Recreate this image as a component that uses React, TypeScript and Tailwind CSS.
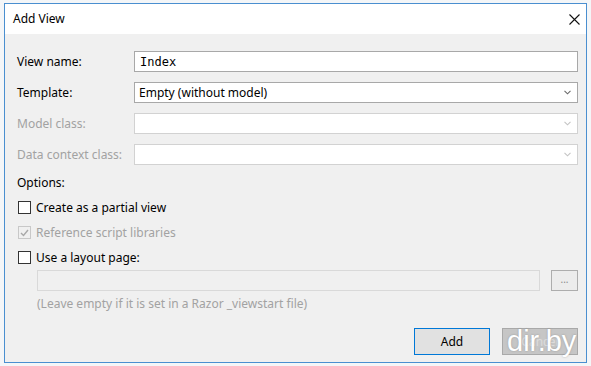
import React from 'react';

const font = { fontFamily: '"Noto Sans", "Open Sans", Arial, sans-serif' };

/** Small combobox chevron */
const Chevron: React.FC<{ disabled?: boolean }> = ({ disabled }) => (
  <svg width="7" height="5" viewBox="0 0 7 5" className="shrink-0">
    <path
      d="M0.5 0.8 L3.5 3.8 L6.5 0.8"
      fill="none"
      stroke={disabled ? '#c4c4c4' : '#6a6a6a'}
      strokeWidth="1.1"
    />
  </svg>
);

const FieldRow: React.FC<{
  label: string;
  disabled?: boolean;
  children: React.ReactNode;
}> = ({ label, disabled, children }) => (
  <div className="flex items-center h-[21px]">
    <span
      className={`w-[117px] shrink-0 text-[12px] ${disabled ? 'text-[#a2a2a2]' : 'text-black'}`}
    >
      {label}
    </span>
    {children}
  </div>
);

const Select: React.FC<{ value?: string; disabled?: boolean }> = ({ value, disabled }) => (
  <div
    className={`flex-1 h-[21px] flex items-center justify-between pl-[4px] pr-[6px] bg-white border ${
      disabled ? 'border-[#d2d2d2]' : 'border-[#a8a8a8]'
    }`}
  >
    <span className="text-[12px] text-black">{value}</span>
    <Chevron disabled={disabled} />
  </div>
);

const Checkbox: React.FC<{ checked?: boolean; disabled?: boolean; label: string }> = ({
  checked,
  disabled,
  label,
}) => (
  <div className="flex items-center h-[25px]">
    <div
      className={`w-[13px] h-[13px] ml-[1px] border flex items-center justify-center ${
        disabled ? 'border-[#c8c8c8] bg-[#f0f0f0]' : 'border-[#333333] bg-white'
      }`}
    >
      {checked && (
        <svg width="9" height="8" viewBox="0 0 9 8">
          <path d="M1 4 L3.5 6.5 L8 1" fill="none" stroke="#a8a8a8" strokeWidth="1.4" />
        </svg>
      )}
    </div>
    <span className={`ml-[5px] text-[12px] ${disabled ? 'text-[#a2a2a2]' : 'text-black'}`}>
      {label}
    </span>
  </div>
);

export default function App() {
  return (
    <div className="w-[591px] h-[366px] bg-[#f4f6f8] overflow-hidden relative" style={font}>
      <div className="ml-[4px] mt-[3px] w-[583px] h-[360px] border border-[#4a8fd0] flex flex-col">
        {/* title bar */}
        <div className="h-[30px] bg-white flex items-center justify-between pl-[8px] pr-[6px] shrink-0">
          <span className="text-[12px] text-black">Add View</span>
          <svg width="11" height="11" viewBox="0 0 11 11">
            <path d="M0.5 0.5 L10.5 10.5 M10.5 0.5 L0.5 10.5" stroke="#111" strokeWidth="1.1" />
          </svg>
        </div>

        {/* body */}
        <div className="flex-1 bg-[#f0f0f0] pt-[17px] pl-[12px] pr-[8px] flex flex-col">
          <FieldRow label="View name:">
            <div className="flex-1 h-[21px] flex items-center pl-[5px] bg-white border border-[#a8a8a8]">
              <span className="text-[12px] text-black" style={{ fontFamily: '"DejaVu Sans Mono", "Liberation Mono", monospace' }}>
                Index
              </span>
            </div>
          </FieldRow>
          <div className="mt-[10px]">
            <FieldRow label="Template:">
              <Select value="Empty (without model)" />
            </FieldRow>
          </div>
          <div className="mt-[10px]">
            <FieldRow label="Model class:" disabled>
              <Select disabled />
            </FieldRow>
          </div>
          <div className="mt-[10px]">
            <FieldRow label="Data context class:" disabled>
              <Select disabled />
            </FieldRow>
          </div>

          <div className="mt-[10px] h-[16px] flex items-center text-[12px] text-black">Options:</div>
          <div className="mt-[4px]">
            <Checkbox label="Create as a partial view" />
            <Checkbox label="Reference script libraries" checked disabled />
            <Checkbox label="Use a layout page:" />
          </div>

          <div className="flex items-center ml-[20px] h-[21px]">
            <div className="flex-1 h-[21px] bg-[#f0f0f0] border border-[#d9d9d9]" />
            <div className="ml-[11px] w-[27px] h-[21px] flex items-center justify-center bg-[#ececec] border border-[#adadad] text-[10px] text-[#8a8a8a] leading-none pb-[3px]">
              ...
            </div>
          </div>
          <div className="ml-[20px] mt-[5px] h-[16px] flex items-center text-[12px] text-[#a2a2a2]">
            (Leave empty if it is set in a Razor _viewstart file)
          </div>

          <div className="mt-[16px] flex justify-end gap-[12px]">
            <div className="w-[76px] h-[27px] flex items-center justify-center bg-[#e1e1e1] border border-[#0078d7] text-[12px] text-black">
              Add
            </div>
            <div className="w-[76px] h-[27px] flex items-center justify-center bg-[#c6c6c6] border border-[#a9a9a9] text-[12px] text-[#dcdcdc]">
              Cancel
            </div>
          </div>
        </div>
      </div>

      {/* watermark over the cancel button */}
      <div
        className="absolute left-[507px] top-[327px] text-[29px] leading-none text-white"
        style={{ fontFamily: '"Liberation Sans", Arial, sans-serif', textShadow: '0 0 2px rgba(110,110,110,0.55)' }}
      >
        dir.by
      </div>
    </div>
  );
}
